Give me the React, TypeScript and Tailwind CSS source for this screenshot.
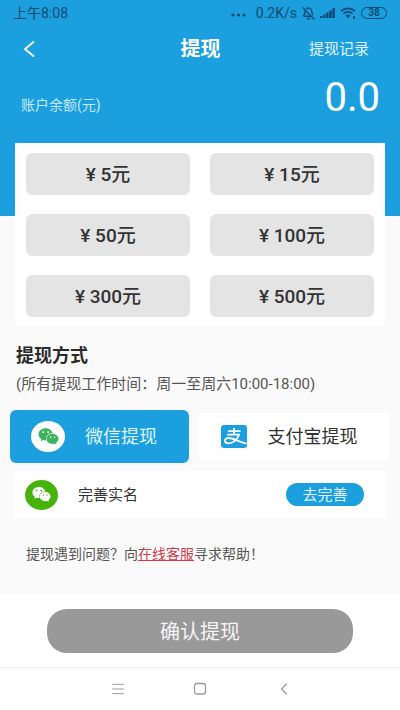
import { BellOff, ChevronLeft, Menu } from "lucide-react";
import { FaWeixin } from "react-icons/fa";

const amounts = [5, 15, 50, 100, 300, 500];

function StatusBar() {
  return (
    <div className="flex h-[26px] items-center justify-between px-[13px] text-sm text-[#0c4a70]">
      <span>上午8:08</span>
      <div className="flex items-center gap-[5px]">
        <svg width="16" height="4" viewBox="0 0 16 4" fill="currentColor" className="mt-1 mr-1">
          <circle cx="2" cy="2" r="1.6" />
          <circle cx="7.5" cy="2" r="1.6" />
          <circle cx="13" cy="2" r="1.6" />
        </svg>
        <span>0.2K/s</span>
        <BellOff size={13} strokeWidth={2.6} />
        <svg width="15" height="10" viewBox="0 0 15 10" fill="currentColor">
          <rect x="0" y="8" width="2.4" height="2" />
          <rect x="3.1" y="6.5" width="2.4" height="3.5" />
          <rect x="6.2" y="4.5" width="2.4" height="5.5" />
          <rect x="9.3" y="2.5" width="2.4" height="7.5" />
          <rect x="12.4" y="0" width="2.4" height="10" />
        </svg>
        <svg width="16" height="12" viewBox="0 0 16 12" fill="none" stroke="currentColor" strokeWidth="1.8">
          <path d="M1 4.2C5 .4 11 .4 15 4.2" />
          <path d="M3.5 6.7c2.6-2.4 6.4-2.4 9 0" />
          <path d="M5.6 8.5 8 11.2l2.4-2.7c-1.4-1.2-3.4-1.2-4.8 0z" fill="currentColor" stroke="none" />
          <path d="M14 9v3" />
        </svg>
        <span className="flex h-[12px] w-[26px] items-center justify-center rounded-full border border-current text-[10px] font-bold">
          38
        </span>
      </div>
    </div>
  );
}

function AlipayIcon() {
  return (
    <svg width="26" height="23" viewBox="0 0 26 23" fill="none" stroke="#fff" strokeWidth="1.8">
      <rect width="26" height="23" rx="3" fill="#1b9fde" stroke="none" />
      <path d="M7 6.2h12.500M13 3v6.500M6 9.700h13" />
      <path d="M18 9.700C16.500 14 12.500 18.300 8 18.300c-5.500 0-5.300-5.300-.5-5.300 5 0 9.500 3.600 18 5.600" />
    </svg>
  );
}

export default function App() {
  return (
    <div className="flex min-h-screen flex-col bg-[#fafafa] font-[Roboto,'Noto_Sans_CJK_SC',sans-serif] text-[#333]">
      <header className="h-[216px] bg-[#1b9fde] text-white">
        <StatusBar />
        <div className="grid h-[46px] grid-cols-3 items-center pr-[31px] pl-4">
          <button aria-label="返回" className="justify-self-start">
            <svg width="26" height="20" viewBox="0 0 26 20" fill="none" stroke="currentColor" strokeWidth="1.8">
              <path d="M18 2.5 9 10l9 7.5" />
            </svg>
          </button>
          <h1 className="pl-4 text-center text-xl font-bold">提现</h1>
          <a href="#records" className="justify-self-end text-[15px] text-[#e3f5fd]">
            提现记录
          </a>
        </div>
        <div className="flex items-center justify-between pt-1 pr-5 pl-[21px]">
          <span className="pt-[14px] text-sm text-[#c5e9f9]">账户余额(元)</span>
          <span className="text-[40px] leading-[44px]">0.0</span>
        </div>
      </header>

      <section className="mx-[15px] -mt-[73px] grid grid-cols-2 gap-x-5 gap-y-[19px] bg-white px-[11px] pt-[10px] pb-[9px]">
        {amounts.map((amount) => (
          <button key={amount} className="h-[42px] rounded-md bg-[#e4e4e4] pt-[2px] text-[19px] font-medium">
            ¥ {amount}元
          </button>
        ))}
      </section>

      <section className="px-4 pt-[17px]">
        <h2 className="text-lg leading-[26px] font-bold text-[#2b2b2b]">提现方式</h2>
        <p className="pt-[3px] text-[15px] leading-6 text-[#555]">(所有提现工作时间：周一至周六10:00-18:00)</p>
      </section>

      <div className="mt-[14px] flex items-center gap-[9px] px-[10px]">
        <button className="flex h-[53px] w-[47%] items-center gap-5 rounded-md bg-[#1b9fde] pl-[21px] text-lg text-[#dff4fd]">
          <span className="flex h-[31px] w-[34px] items-center justify-center rounded-[50%] bg-white text-[#3cb45f]">
            <FaWeixin size={21} />
          </span>
          微信提现
        </button>
        <button className="flex h-[47px] flex-1 items-center gap-[21px] rounded-md bg-white pl-[23px] text-lg">
          <AlipayIcon />
          支付宝提现
        </button>
      </div>

      <div className="mx-[14px] mt-2 flex h-[47px] items-center bg-white pr-[22px] pl-[11px] text-[15px]">
        <span className="flex h-[30px] w-[33px] items-center justify-center rounded-[50%] bg-[#46b30a] text-white">
          <FaWeixin size={19} />
        </span>
        <span className="flex-1 pt-[2px] pl-5">完善实名</span>
        <button className="h-[23px] w-[78px] rounded-full bg-[#1b9fde] pt-[2px] leading-[21px] text-[#e3f5fd]">
          去完善
        </button>
      </div>

      <p className="px-[26px] pt-[25px] pb-[29px] text-sm leading-[22px] text-[#555]">
        提现遇到问题？向
        <a href="#service" className="text-[#d03a4c] underline">
          在线客服
        </a>
        寻求帮助！
      </p>

      <footer className="flex-1 bg-white">
        <div className="border-b border-[#f2f2f2] px-[47px] pt-[15px] pb-[14px]">
          <button className="h-11 w-full rounded-[20px] bg-[#999] pt-[2px] text-xl text-[#f5f5f5]">确认提现</button>
        </div>
        <nav className="flex h-[42px] items-center justify-center gap-[67px] pl-1 text-[#999]">
          <button aria-label="菜单">
            <Menu size={16} strokeWidth={1.5} />
          </button>
          <button aria-label="主页">
            <svg width="14" height="14" viewBox="0 0 14 14" fill="none" stroke="currentColor" strokeWidth="1.3">
              <rect x="1.5" y="1.5" width="11" height="10.5" rx="2.5" />
            </svg>
          </button>
          <button aria-label="后退">
            <ChevronLeft size={20} strokeWidth={1.5} />
          </button>
        </nav>
      </footer>
    </div>
  );
}
